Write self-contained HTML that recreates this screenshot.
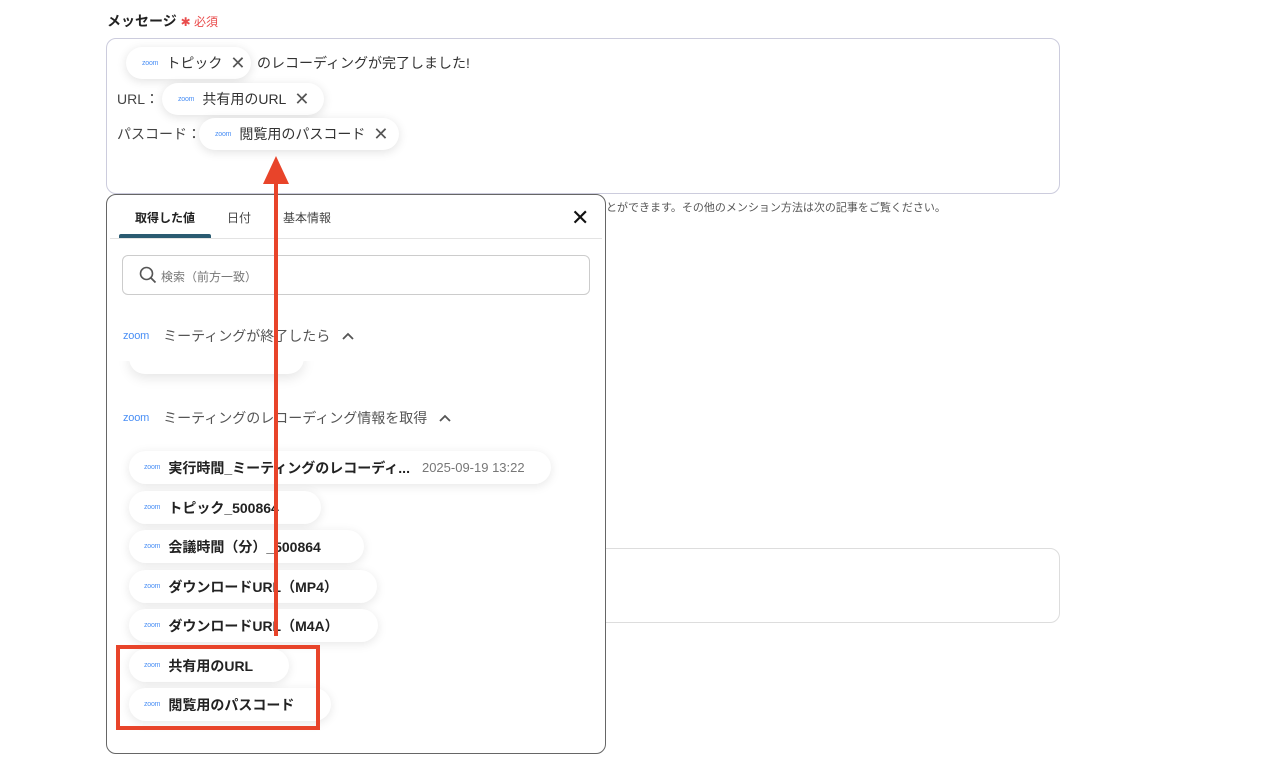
<!DOCTYPE html>
<html><head><meta charset="utf-8"><style>
*{box-sizing:border-box;margin:0;padding:0}
body{width:1274px;height:758px;background:#fff;font-family:"Liberation Sans","Noto Sans CJK JP",sans-serif;position:relative;overflow:hidden;color:#333}
.abs{position:absolute}
.chip{position:absolute;height:32px;border-radius:16px;background:#fff;box-shadow:0 2px 10px rgba(0,0,0,.12);display:flex;align-items:center;padding-left:16px;font-size:14px;color:#333;white-space:nowrap}
.z{color:#4a8ff5;font-size:7px;margin-right:8px;letter-spacing:-.2px}
.x{margin-left:8px;font-size:18px;color:#555}
.item{position:absolute;left:129px;height:33px;border-radius:17px;background:#fff;box-shadow:0 2px 10px rgba(0,0,0,.1);display:flex;align-items:center;padding-left:15px;font-size:14px;font-weight:bold;color:#222;white-space:nowrap}
.item .z{font-weight:normal}
.sec{position:absolute;left:123px;font-size:14px;color:#555;display:flex;align-items:center;white-space:nowrap}
.sec .z{font-size:11px;margin-right:14px}
</style></head><body>
<div class="abs" style="left:107px;top:11px;font-size:14px;font-weight:bold;color:#222">メッセージ <span style="color:#e94d4d;font-size:12px;font-weight:normal">✱ 必須</span></div>
<div class="abs" style="left:106px;top:38px;width:954px;height:156px;border:1px solid #ccd;border-radius:10px"></div>
<div class="chip" style="left:126px;top:47px;width:125px"><span class="z">zoom</span>トピック<span class="x">✕</span></div>
<div class="abs" style="left:257px;top:53px;font-size:14px">のレコーディングが完了しました!</div>
<div class="abs" style="left:117px;top:89px;font-size:14px;color:#444">URL：</div>
<div class="chip" style="left:162px;top:83px;width:162px"><span class="z">zoom</span>共有用のURL<span class="x">✕</span></div>
<div class="abs" style="left:117px;top:124px;font-size:14px;color:#444">パスコード：</div>
<div class="chip" style="left:199px;top:118px;width:200px"><span class="z">zoom</span>閲覧用のパスコード<span class="x">✕</span></div>
<div class="abs" style="left:606px;top:199px;font-size:11px;color:#555">とができます。その他のメンション方法は次の記事をご覧ください。</div>
<div class="abs" style="left:590px;top:548px;width:470px;height:75px;border:1px solid #ddd;border-radius:10px"></div>

<div class="abs" style="left:106px;top:194px;width:500px;height:560px;border:1px solid #666;border-radius:10px;background:#fff"></div>
<div class="abs" style="left:135px;top:209px;font-size:12px;font-weight:bold;color:#222">取得した値</div>
<div class="abs" style="left:227px;top:209px;font-size:12px;color:#444">日付</div>
<div class="abs" style="left:283px;top:209px;font-size:12px;color:#444">基本情報</div>
<div class="abs" style="left:119px;top:234px;width:92px;height:4px;background:#2a5b71;border-radius:2px 2px 0 0"></div>
<div class="abs" style="left:110px;top:238px;width:492px;height:1px;background:#e3e3e3"></div>
<div class="abs" style="left:571px;top:205px;font-size:22px;color:#111">✕</div>
<div class="abs" style="left:122px;top:255px;width:468px;height:40px;border:1px solid #ccc;border-radius:6px"></div>
<svg class="abs" style="left:139px;top:266px" width="18" height="18"><circle cx="7.5" cy="7.5" r="6" fill="none" stroke="#555" stroke-width="1.6"/><line x1="12" y1="12" x2="16.5" y2="16.5" stroke="#555" stroke-width="1.8"/></svg>
<div class="abs" style="left:161px;top:268px;font-size:12px;color:#777">検索（前方一致）</div>
<div class="abs" style="left:129px;top:342px;width:175px;height:32px;box-shadow:0 4px 12px rgba(0,0,0,.1);border-radius:16px;background:#fff"></div>
<div class="abs" style="left:108px;top:312px;width:496px;height:49px;background:#fff"></div>
<div class="sec" style="top:326px"><span class="z">zoom</span>ミーティングが終了したら&nbsp;&nbsp;&nbsp;<svg width="12" height="8"><polyline points="1,7 6,2 11,7" fill="none" stroke="#555" stroke-width="1.8"/></svg></div>
<div class="sec" style="top:408px"><span class="z">zoom</span>ミーティングのレコーディング情報を取得&nbsp;&nbsp;&nbsp;<svg width="12" height="8"><polyline points="1,7 6,2 11,7" fill="none" stroke="#555" stroke-width="1.8"/></svg></div>
<div class="item" style="top:451px;width:422px"><span class="z">zoom</span>実行時間_ミーティングのレコーディ...<span style="font-weight:normal;color:#777;font-size:13px;margin-left:12px">2025-09-19 13:22</span></div>
<div class="item" style="top:491px;width:192px"><span class="z">zoom</span>トピック_500864</div>
<div class="item" style="top:530px;width:235px"><span class="z">zoom</span>会議時間（分）_500864</div>
<div class="item" style="top:570px;width:248px"><span class="z">zoom</span>ダウンロードURL（MP4）</div>
<div class="item" style="top:609px;width:249px"><span class="z">zoom</span>ダウンロードURL（M4A）</div>
<div class="item" style="top:649px;width:160px"><span class="z">zoom</span>共有用のURL</div>
<div class="item" style="top:688px;width:202px"><span class="z">zoom</span>閲覧用のパスコード</div>
<div class="abs" style="left:116px;top:645px;width:204px;height:85px;border:4px solid #e8442a"></div>
<div class="abs" style="left:274px;top:182px;width:4px;height:454px;background:#e8442a"></div>
<svg class="abs" style="left:263px;top:156px" width="26" height="28"><polygon points="13,0 26,28 0,28" fill="#e8442a"/></svg>
</body></html>
